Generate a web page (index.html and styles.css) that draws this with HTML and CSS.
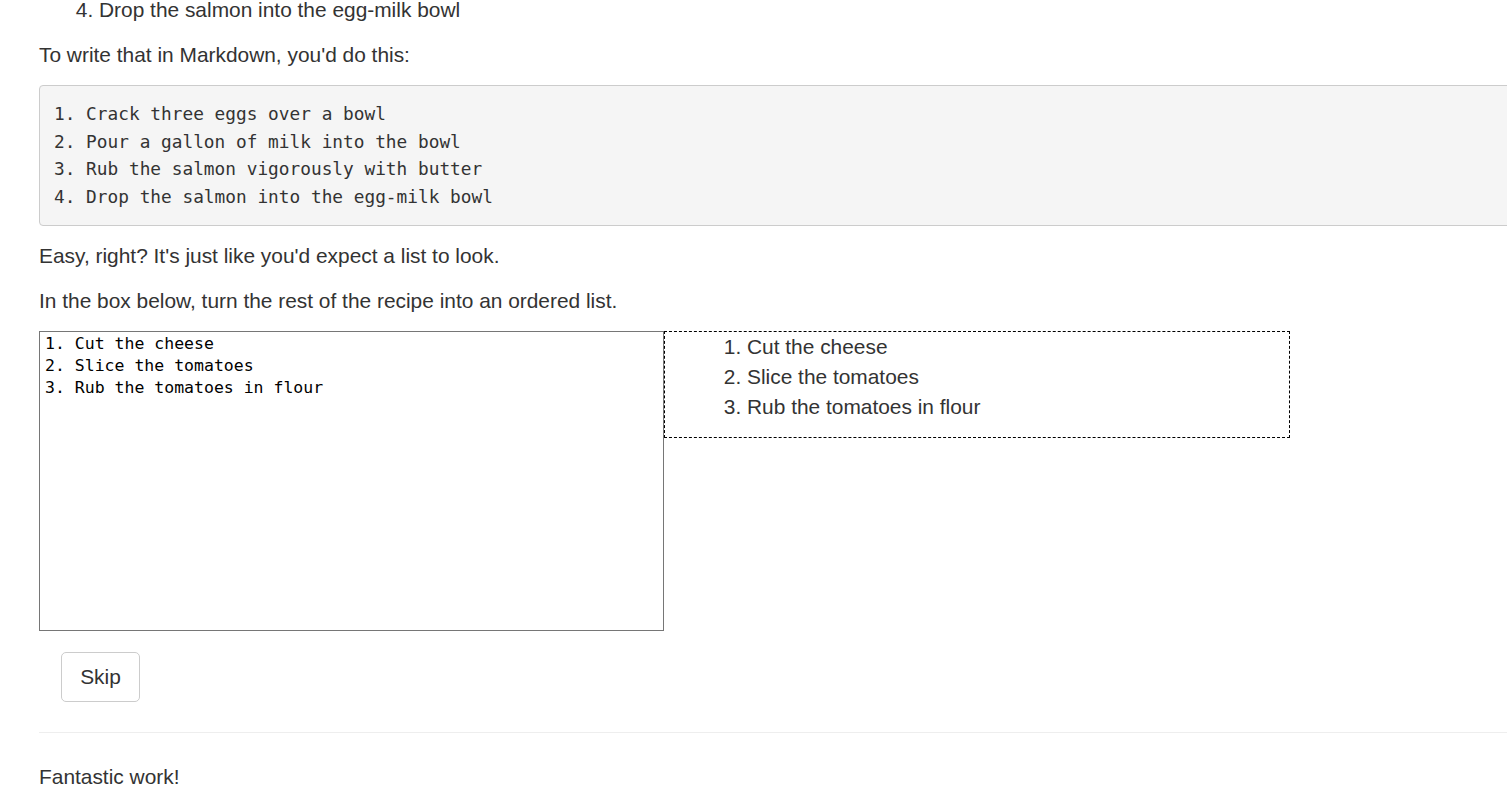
FILE: index.html
```html
<!DOCTYPE html>
<html lang="en">
<head>
<meta charset="utf-8">
<title>Ordered lists</title>
<link rel="stylesheet" href="styles.css">
</head>
<body>
<main class="page">
  <ol class="recipe" start="4">
    <li>Drop the salmon into the egg-milk bowl</li>
  </ol>
  <p class="text">To write that in Markdown, you'd do this:</p>
  <pre class="code">1. Crack three eggs over a bowl
2. Pour a gallon of milk into the bowl
3. Rub the salmon vigorously with butter
4. Drop the salmon into the egg-milk bowl</pre>
  <p class="text">Easy, right? It's just like you'd expect a list to look.</p>
  <p class="text">In the box below, turn the rest of the recipe into an ordered list.</p>
  <div class="exercise">
    <textarea class="editor" spellcheck="false">1. Cut the cheese
2. Slice the tomatoes
3. Rub the tomatoes in flour</textarea>
    <div class="preview">
      <ol class="preview-list">
        <li>Cut the cheese</li>
        <li>Slice the tomatoes</li>
        <li>Rub the tomatoes in flour</li>
      </ol>
    </div>
  </div>
  <div class="actions">
    <button class="btn" type="button">Skip</button>
  </div>
  <hr class="rule">
  <p class="text">Fantastic work!</p>
</main>
</body>
</html>
```
FILE: styles.css
```css
html, body {
  margin: 0;
  padding: 0;
  overflow: hidden;
  background: #fff;
}
body {
  font-family: "Liberation Sans", Arial, sans-serif;
  font-size: 20.9px;
  line-height: 30px;
  color: #333;
}
.page {
  width: 1560px;
  margin-left: 39px;
}
.recipe {
  margin: -5px 0 15px;
  padding-left: 60px;
}
.text {
  margin: 0 0 15px;
}
.code {
  margin: 0 0 15px;
  padding: 14px;
  background: #f5f5f5;
  border: 1px solid #ccc;
  border-radius: 4px;
  font-family: "DejaVu Sans Mono", monospace;
  font-size: 17.8px;
  line-height: 27.67px;
  color: #333;
}
.exercise {
  display: flex;
  align-items: flex-start;
}
.editor {
  box-sizing: border-box;
  width: 625px;
  height: 300px;
  margin: 0;
  padding: 1px 5px 0 5px;
  border: 1px solid #767676;
  border-radius: 0;
  font-family: "DejaVu Sans Mono", monospace;
  font-size: 16.5px;
  line-height: 22px;
  color: #000;
  resize: none;
  outline: none;
}
.preview {
  box-sizing: border-box;
  width: 626px;
  border: 1px dashed #000;
}
.preview-list {
  margin: 0 0 15px;
  padding-left: 82px;
}
.actions {
  padding: 21px 0 0 22px;
}
.btn {
  box-sizing: border-box;
  width: 79px;
  height: 50px;
  padding: 0;
  background: #fff;
  border: 1px solid #ccc;
  border-radius: 5px;
  font-family: "Liberation Sans", Arial, sans-serif;
  font-size: 20.9px;
  color: #333;
}
.rule {
  margin: 30px 0 29px;
  border: 0;
  border-top: 1px solid #eee;
}
```
